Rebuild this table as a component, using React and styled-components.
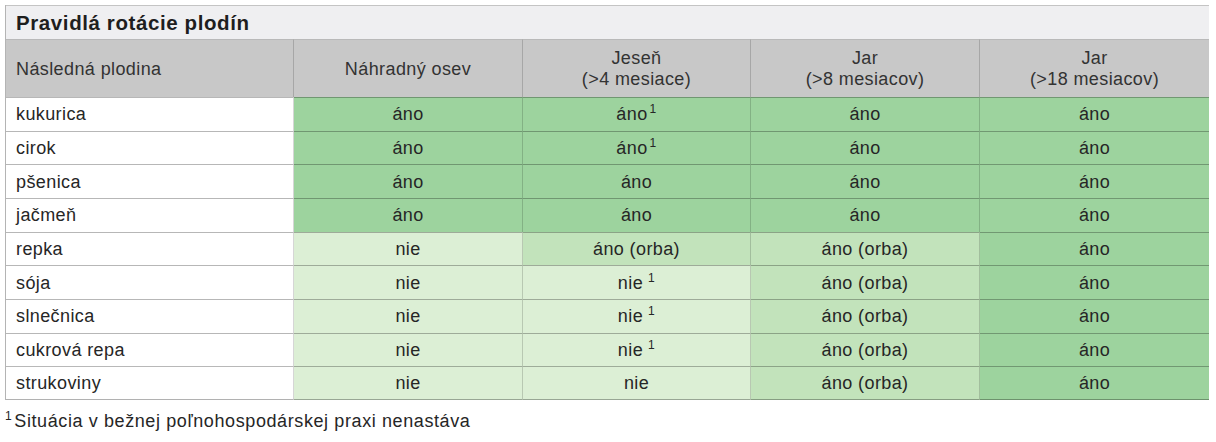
import styled, { createGlobalStyle } from "styled-components"

const GlobalStyle = createGlobalStyle`
  body {
    margin: 0;
    background: #ffffff;
    font-family: "Liberation Sans", Arial, sans-serif;
    color: #262626;
  }
`

const tones = {
  white: "#ffffff",
  header: "#c8c8c8",
  dark: "#9dd39e",
  mid: "#c2e3bb",
  light: "#dcefd5",
}

const Page = styled.div`
  padding: 5px 9px 0 5px;
`

const Table = styled.div`
  display: grid;
  grid-template-columns: 288px 229px 228px 229px 229px;
  grid-template-rows: 34px 58px repeat(9, 33.67px);
  width: 1203px;
  border-left: 1px solid #b4b4b4;
  border-right: 1px solid #b4b4b4;
  box-sizing: border-box;
`

const Title = styled.div`
  grid-column: 1 / -1;
  display: flex;
  align-items: center;
  padding: 1px 10px 0;
  background: #efeff1;
  border-top: 1px solid #c4c4c4;
  font-size: 20.5px;
  font-weight: 700;
  letter-spacing: 0.6px;
  color: #1e1e1e;
`

const Cell = styled.div`
  display: flex;
  flex-direction: column;
  justify-content: center;
  align-items: ${(p) => (p.$left ? "flex-start" : "center")};
  text-align: ${(p) => (p.$left ? "left" : "center")};
  padding: 1px 10px 0;
  background: ${(p) => tones[p.$tone]};
  border-top: 1px solid ${(p) => (p.$tone === "header" ? "#b9b9b9" : "rgba(0, 0, 0, 0.28)")};
  border-right: ${(p) => (p.$last ? "none" : "1px solid rgba(0, 0, 0, 0.16)")};
  border-bottom: ${(p) => (p.$bottom ? "1px solid rgba(0, 0, 0, 0.3)" : "none")};
  font-size: 18px;
  letter-spacing: 0.4px;
  line-height: 21px;
  color: ${(p) => (p.$tone === "header" ? "#333333" : "#262626")};
  box-sizing: border-box;
  white-space: nowrap;
`

const Sup = styled.sup`
  font-size: 12px;
  line-height: 0;
  vertical-align: 7px;
  margin-left: ${(p) => (p.$gap ? "5px" : "2px")};
`

const Footnote = styled.p`
  margin: 11px 0 0;
  font-size: 18px;
  letter-spacing: 0.6px;
  color: #262626;

  ${Sup} {
    margin: 0 2px 0 0;
  }
`

const headers = [
  ["Následná plodina"],
  ["Náhradný osev"],
  ["Jeseň", "(>4 mesiace)"],
  ["Jar", "(>8 mesiacov)"],
  ["Jar", "(>18 mesiacov)"],
]

// [text, tone, footnote mark]
const rows = [
  ["kukurica", ["áno", "dark"], ["áno", "dark", "tight"], ["áno", "dark"], ["áno", "dark"]],
  ["cirok", ["áno", "dark"], ["áno", "dark", "tight"], ["áno", "dark"], ["áno", "dark"]],
  ["pšenica", ["áno", "dark"], ["áno", "dark"], ["áno", "dark"], ["áno", "dark"]],
  ["jačmeň", ["áno", "dark"], ["áno", "dark"], ["áno", "dark"], ["áno", "dark"]],
  ["repka", ["nie", "light"], ["áno (orba)", "mid"], ["áno (orba)", "mid"], ["áno", "dark"]],
  ["sója", ["nie", "light"], ["nie", "light", "gap"], ["áno (orba)", "mid"], ["áno", "dark"]],
  ["slnečnica", ["nie", "light"], ["nie", "light", "gap"], ["áno (orba)", "mid"], ["áno", "dark"]],
  ["cukrová repa", ["nie", "light"], ["nie", "light", "gap"], ["áno (orba)", "mid"], ["áno", "dark"]],
  ["strukoviny", ["nie", "light"], ["nie", "light"], ["áno (orba)", "mid"], ["áno", "dark"]],
]

export default function App() {
  return (
    <Page>
      <GlobalStyle />
      <Table>
        <Title>Pravidlá rotácie plodín</Title>
        {headers.map((lines, i) => (
          <Cell key={i} $tone="header" $left={i === 0} $last={i === headers.length - 1}>
            {lines.map((line) => (
              <span key={line}>{line}</span>
            ))}
          </Cell>
        ))}
        {rows.map(([name, ...cells], r) => {
          const bottom = r === rows.length - 1
          return [
            <Cell key={name} $tone="white" $left $bottom={bottom}>
              {name}
            </Cell>,
            ...cells.map(([text, tone, mark], c) => (
              <Cell key={name + c} $tone={tone} $bottom={bottom} $last={c === cells.length - 1}>
                <span>
                  {text}
                  {mark && <Sup $gap={mark === "gap"}>1</Sup>}
                </span>
              </Cell>
            )),
          ]
        })}
      </Table>
      <Footnote>
        <Sup>1</Sup>Situácia v bežnej poľnohospodárskej praxi nenastáva
      </Footnote>
    </Page>
  )
}
